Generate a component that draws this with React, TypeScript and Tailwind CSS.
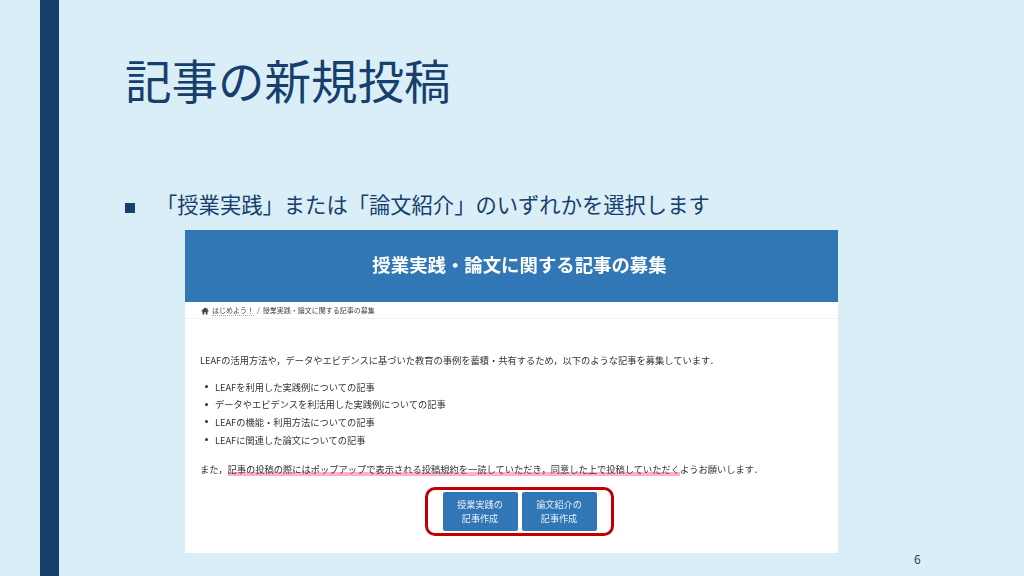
import React from "react";
const jp = "font-['Noto_Sans_CJK_JP','Noto_Sans',sans-serif]";
function Home() {
  return (
    <svg viewBox="0 0 16 16" className="w-[8px] h-[8px] mr-[3px] fill-[#444]">
      <path d="M8 1 L0.5 8 L2 9.3 L3 8.4 V15 H6.5 V10.5 H9.5 V15 H13 V8.4 L14 9.3 L15.5 8 L13 5.6 V2 H11 V3.8 Z" />
    </svg>
  );
}
export default function App() {
  const items = [
    "LEAFを利用した実践例についての記事",
    "データやエビデンスを利活用した実践例についての記事",
    "LEAFの機能・利用方法についての記事",
    "LEAFに関連した論文についての記事",
  ];
  return (
    <div className={`w-[1024px] h-[576px] overflow-hidden bg-[#daeef8] flex ${jp}`}>
      <div className="ml-[40px] w-[19px] h-full bg-[#163f6d] shrink-0" />
      <div className="flex flex-col pl-[66px] flex-1">
        <h1 className="mt-[47px] h-[64px] leading-[64px] text-[46.5px] font-normal text-[#163f6d] whitespace-nowrap">記事の新規投稿</h1>
        <div className="mt-[78px] h-[30px] flex items-center text-[21.3px] leading-[30px] text-[#163f6d] whitespace-nowrap">
          <span className="w-[10px] h-[10px] bg-[#163f6d] mr-[21px] mt-[7px] shrink-0" />
          <span>「授業実践」または「論文紹介」のいずれかを選択します</span>
        </div>
        <div className="ml-[60px] mt-[11px] w-[653px] h-[323px] bg-white flex flex-col blur-[0.35px]">
          <div className="h-[72px] bg-[#3277b5] flex items-center justify-center pl-[16px] pb-[3px] text-white text-[18.4px] font-bold">
            授業実践・論文に関する記事の募集
          </div>
          <div className="h-[17px] flex items-center pl-[16px] pt-[1px] border-b border-[#f2f2f2] text-[7px] text-[#444]">
            <Home />
            <span className="border-b border-dotted border-[#aaa] leading-[9px]">はじめよう！</span>
            <span className="mx-[3px]">/</span>
            <span>授業実践・論文に関する記事の募集</span>
          </div>
          <div className="px-[15px] pt-[32px] flex flex-col text-[9.25px] text-[#333] leading-[18px]">
            <p className="h-[18px] whitespace-nowrap">LEAFの活用方法や，データやエビデンスに基づいた教育の事例を蓄積・共有するため，以下のような記事を募集しています．</p>
            <ul className="mt-[9px] flex flex-col">
              {items.map((t) => (
                <li key={t} className="h-[17.6px] flex items-center whitespace-nowrap">
                  <span className="w-[3px] h-[3px] rounded-full bg-[#333] ml-[5px] mr-[7px]" />
                  {t}
                </li>
              ))}
            </ul>
            <p className="mt-[11.6px] h-[18px] whitespace-nowrap">
              また，<span className="bg-[linear-gradient(transparent_70%,#ffb0c4_70%)]">記事の投稿の際にはポップアップで表示される投稿規約を一読していただき，同意した上で投稿していただく</span>ようお願いします．
            </p>
            <div className="mt-[9px] ml-[16px] self-center w-[189px] h-[49px] border-[3px] border-[#c00000] rounded-[10px] flex items-center justify-center gap-[4px]">
              {["授業実践の", "論文紹介の"].map((t) => (
                <div key={t} className="w-[75px] h-[39px] rounded-[2px] bg-[#3277b5] text-[#e8f0f8] flex flex-col items-center justify-center text-[9.1px] leading-[14px]">
                  <span>{t}</span>
                  <span>記事作成</span>
                </div>
              ))}
            </div>
          </div>
        </div>
        <div className="mt-[-2px] h-[16px] pl-[789px] text-[12px] leading-[16px] text-[#163f6d]">6</div>
      </div>
    </div>
  );
}
